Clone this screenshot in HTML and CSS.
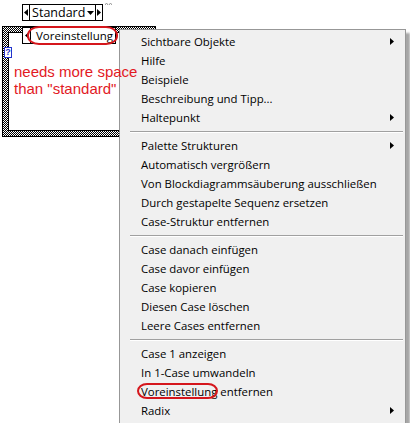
FILE: index.html
```html
<!DOCTYPE html>
<html>
<head>
<meta charset="utf-8">
<link rel="stylesheet" href="styles.css">
</head>
<body>
<div class="toprow">
  <div class="ring">
    <span class="cell cell-l"><svg width="4" height="7" viewBox="0 0 4 7"><polygon points="4,0 0,3.5 4,7"/></svg></span>
    <span class="ring-text">Standard</span>
    <span class="drop"><svg width="7" height="4" viewBox="0 0 7 4"><polygon points="0,0 7,0 3.5,4"/></svg></span>
    <span class="cell cell-r"><svg width="4" height="7" viewBox="0 0 4 7"><polygon points="0,0 4,3.5 0,7"/></svg></span>
  </div>
  <svg class="grip" width="7" height="4" viewBox="0 0 7 4"><polyline points="0,3 1.5,1 3,3" /><polyline points="4,3 5.5,1 7,3" /></svg>
</div>

<div class="case">
  <div class="case-inner">
    <p class="note">needs more space<br>than "standard"</p>
  </div>
  <div class="selector">
    <span class="cell cell-l"><svg width="4" height="7" viewBox="0 0 4 7"><polygon points="4,0 0,3.5 4,7"/></svg></span>
    <span class="sel-text">Voreinstellung</span>
  </div>
  <div class="help">?</div>
</div>

<div class="menu">
  <div class="item"><span>Sichtbare Objekte</span><svg class="sub" width="4" height="7" viewBox="0 0 4 7"><polygon points="0,0 4,3.5 0,7"/></svg></div>
  <div class="item"><span>Hilfe</span></div>
  <div class="item"><span>Beispiele</span></div>
  <div class="item"><span>Beschreibung und Tipp...</span></div>
  <div class="item"><span>Haltepunkt</span><svg class="sub" width="4" height="7" viewBox="0 0 4 7"><polygon points="0,0 4,3.5 0,7"/></svg></div>
  <div class="sep"></div>
  <div class="item"><span>Palette Strukturen</span><svg class="sub" width="4" height="7" viewBox="0 0 4 7"><polygon points="0,0 4,3.5 0,7"/></svg></div>
  <div class="item"><span>Automatisch vergrößern</span></div>
  <div class="item"><span>Von Blockdiagrammsäuberung ausschließen</span></div>
  <div class="item"><span>Durch gestapelte Sequenz ersetzen</span></div>
  <div class="item"><span>Case-Struktur entfernen</span></div>
  <div class="sep"></div>
  <div class="item"><span>Case danach einfügen</span></div>
  <div class="item"><span>Case davor einfügen</span></div>
  <div class="item"><span>Case kopieren</span></div>
  <div class="item"><span>Diesen Case löschen</span></div>
  <div class="item"><span>Leere Cases entfernen</span></div>
  <div class="sep"></div>
  <div class="item"><span>Case 1 anzeigen</span></div>
  <div class="item"><span>In 1-Case umwandeln</span></div>
  <div class="item"><span>Voreinstellung entfernen</span></div>
  <div class="item"><span>Radix</span><svg class="sub" width="4" height="7" viewBox="0 0 4 7"><polygon points="0,0 4,3.5 0,7"/></svg></div>
</div>

<div class="mark mark-label"></div>
<div class="mark mark-menu"></div>
</body>
</html>
```

FILE: styles.css
```css
html, body {
  margin: 0;
  padding: 0;
  background: #fff;
}
body {
  width: 410px;
  height: 423px;
  overflow: hidden;
  position: relative;
  font-family: "Open Sans", "Noto Sans", sans-serif;
  color: #000;
}
svg polygon { fill: #000; }

.toprow {
  display: flex;
  align-items: flex-start;
  gap: 2px;
  padding: 4px 0 0 22px;
  height: 17px;
}
.ring {
  display: flex;
  align-items: stretch;
  width: 81px;
  height: 17px;
  box-sizing: border-box;
  border: 1px solid #000;
  background: #fff;
  font-size: 12.5px;
  line-height: 15px;
}
.cell {
  width: 7px;
  display: flex;
  align-items: center;
  justify-content: center;
}
.cell-l { border-right: 1px solid #000; }
.cell-r { border-left: 1px solid #000; }
.ring-text {
  flex: 1;
  padding-left: 2px;
  white-space: nowrap;
}
.drop {
  width: 11px;
  display: flex;
  align-items: center;
  justify-content: center;
}
.grip {
  margin-top: -2px;
}
.grip polyline {
  fill: none;
  stroke: #9a9a9a;
  stroke-width: 1;
}

.case {
  position: relative;
  margin: 5px 0 0 2px;
  width: 154px;
  height: 111px;
  box-sizing: border-box;
  border: 1px solid #000;
  padding: 5px;
  background: repeating-conic-gradient(#000 0 25%, #fff 0 50%) 0 0 / 2px 2px;
}
.case-inner {
  height: 100%;
  box-sizing: border-box;
  background: #fff;
  border: 1px solid #000;
  padding: 30px 0 0 5px;
}
.note {
  position: relative;
  z-index: 3;
  margin: 0;
  font-family: "Liberation Sans", Arial, sans-serif;
  font-size: 15px;
  line-height: 17px;
  color: #e2191f;
  white-space: nowrap;
}
.selector {
  position: absolute;
  left: 19px;
  top: 0px;
  width: 94px;
  height: 17px;
  box-sizing: border-box;
  display: flex;
  border: 1px solid #000;
  background: #fff;
  font-size: 11.5px;
  line-height: 15px;
}
.sel-text {
  padding-left: 5px;
  white-space: nowrap;
}
.help {
  position: absolute;
  left: 1px;
  top: 20px;
  width: 8px;
  height: 11px;
  box-sizing: border-box;
  border: 1px solid #2233cc;
  background: #fff;
  color: #2233cc;
  font-family: "Liberation Sans", Arial, sans-serif;
  font-size: 9px;
  font-weight: bold;
  line-height: 9px;
  text-align: center;
  overflow: visible;
}

.menu {
  position: absolute;
  z-index: 2;
  left: 119px;
  top: 29px;
  width: 287px;
  box-sizing: border-box;
  border: 1px solid #979797;
  background: #f0f0f0;
  padding: 2px 0 3px;
  box-shadow: 4px 4px 2px rgba(0, 0, 0, 0.35);
  font-size: 11.4px;
}
.item {
  height: 19px;
  line-height: 19px;
  padding: 0 11px 0 21px;
  display: flex;
  justify-content: space-between;
  align-items: center;
  white-space: nowrap;
}
.sep {
  margin: 4px 2px 3px 10px;
  height: 1px;
  border-top: 1px solid #a0a0a0;
  background: #fff;
}

.mark {
  position: absolute;
  z-index: 4;
  box-sizing: border-box;
  border: 2px solid #d5161c;
}
.mark-label {
  left: 27px;
  top: 26px;
  width: 91px;
  height: 19px;
  border-radius: 12px / 9px;
}
.mark-menu {
  left: 137px;
  top: 383px;
  width: 81px;
  height: 16px;
  border-radius: 10px / 8px;
}
```
